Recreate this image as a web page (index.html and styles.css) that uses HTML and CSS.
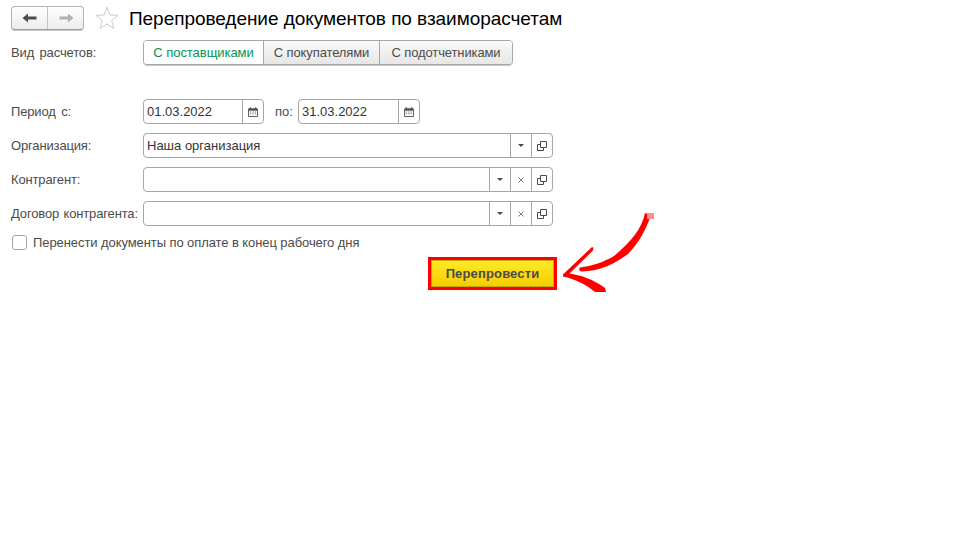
FILE: index.html
```html
<!DOCTYPE html>
<html lang="ru">
<head>
<meta charset="utf-8">
<title>Перепроведение документов по взаиморасчетам</title>
<link rel="stylesheet" href="styles.css">
</head>
<body>
<div class="page">
  <header class="head">
    <div class="nav">
      <button class="nav-btn" type="button" aria-label="Назад">
        <svg width="16" height="12" viewBox="0 0 16 12"><path d="M0.5 6 L6 1.5 V4.5 H14.5 V7.5 H6 V10.5 Z" fill="#4d4d4d"/></svg>
      </button>
      <button class="nav-btn" type="button" aria-label="Вперёд">
        <svg width="16" height="12" viewBox="0 0 16 12"><path d="M15.5 6 L10 1.5 V4.5 H1.5 V7.5 H10 V10.5 Z" fill="#b0b0b0"/></svg>
      </button>
    </div>
    <svg class="star" width="24" height="24" viewBox="0 0 24 24"><path d="M12 1.2 L14.9 9 L23 9.3 L16.7 14.4 L18.9 22.6 L12 18 L5.1 22.6 L7.3 14.4 L1 9.3 L9.1 9 Z" fill="#fff" stroke="#c9ced2" stroke-width="1"/></svg>
    <h1 class="title">Перепроведение документов по взаиморасчетам</h1>
  </header>

  <div class="row row-tabs">
    <span class="label label-gap">Вид расчетов:</span>
    <div class="tabs">
      <span class="tab tab-on tab-a">С поставщиками</span>
      <span class="tab tab-b">С покупателями</span>
      <span class="tab tab-c">С подотчетниками</span>
    </div>
  </div>

  <div class="row row-period">
    <span class="label label-gap">Период с:</span>
    <div class="field field-date">
      <span class="value">01.03.2022</span>
      <span class="cell cell-cal"><svg width="10" height="10" viewBox="0 0 11 11"><path d="M0.5 2.5 H10.5 V10.5 H0.5 Z" fill="#fff" stroke="#4a4a4a"/><path d="M0.5 1.5 H10.5 V4 H0.5 Z" fill="#4a4a4a"/><path d="M2.5 0 V2 M8.5 0 V2" stroke="#4a4a4a"/><path d="M2 5.5 H3.5 M4.7 5.5 H6.2 M7.4 5.5 H8.9 M2 7.5 H3.5 M4.7 7.5 H6.2 M7.4 7.5 H8.9" stroke="#6a6a6a"/></svg></span>
    </div>
    <span class="label-by">по:</span>
    <div class="field field-date field-date-end">
      <span class="value">31.03.2022</span>
      <span class="cell cell-cal"><svg width="10" height="10" viewBox="0 0 11 11"><path d="M0.5 2.5 H10.5 V10.5 H0.5 Z" fill="#fff" stroke="#4a4a4a"/><path d="M0.5 1.5 H10.5 V4 H0.5 Z" fill="#4a4a4a"/><path d="M2.5 0 V2 M8.5 0 V2" stroke="#4a4a4a"/><path d="M2 5.5 H3.5 M4.7 5.5 H6.2 M7.4 5.5 H8.9 M2 7.5 H3.5 M4.7 7.5 H6.2 M7.4 7.5 H8.9" stroke="#6a6a6a"/></svg></span>
    </div>
  </div>

  <div class="row">
    <span class="label">Организация:</span>
    <div class="field field-wide">
      <span class="value">Наша организация</span>
      <span class="cell"><i class="caret"></i></span>
      <span class="cell"><svg width="10" height="10" viewBox="0 0 10 10"><path d="M3.5 0.5 H9.5 V6.5 H3.5 Z M3 3.5 H0.5 V9.5 H6.5 V7" fill="none" stroke="#4a4a4a"/></svg></span>
    </div>
  </div>

  <div class="row">
    <span class="label">Контрагент:</span>
    <div class="field field-wide">
      <span class="value"></span>
      <span class="cell"><i class="caret"></i></span>
      <span class="cell"><svg width="6" height="6" viewBox="0 0 7 7"><path d="M0.5 0.5 L6.5 6.5 M6.5 0.5 L0.5 6.5" stroke="#777" stroke-width="1.1"/></svg></span>
      <span class="cell"><svg width="10" height="10" viewBox="0 0 10 10"><path d="M3.5 0.5 H9.5 V6.5 H3.5 Z M3 3.5 H0.5 V9.5 H6.5 V7" fill="none" stroke="#4a4a4a"/></svg></span>
    </div>
  </div>

  <div class="row">
    <span class="label">Договор контрагента:</span>
    <div class="field field-wide">
      <span class="value"></span>
      <span class="cell"><i class="caret"></i></span>
      <span class="cell"><svg width="6" height="6" viewBox="0 0 7 7"><path d="M0.5 0.5 L6.5 6.5 M6.5 0.5 L0.5 6.5" stroke="#777" stroke-width="1.1"/></svg></span>
      <span class="cell"><svg width="10" height="10" viewBox="0 0 10 10"><path d="M3.5 0.5 H9.5 V6.5 H3.5 Z M3 3.5 H0.5 V9.5 H6.5 V7" fill="none" stroke="#4a4a4a"/></svg></span>
    </div>
  </div>

  <label class="check-row">
    <span class="check"></span>
    <span class="label-check">Перенести документы по оплате в конец рабочего дня</span>
  </label>

  <div class="action">
    <div class="frame"><button class="primary" type="button">Перепровести</button></div>
  </div>

  <svg class="arrow" width="100" height="85" viewBox="0 0 100 85">
    <path d="M86 3 C83 18 73 31 55 46 C45 52 33 56 21 57.5 C19.5 59 20 61.5 23 61.5 C41 61.5 57 53 69 44 C79 34 87 20 92 5 Z" fill="#f00"/>
    <path d="M88 3 H95 V9 H88 Z" fill="#ff8c8c"/>
    <path d="M33 37 C34.5 37 35 39.5 33.5 41 L10.5 63.5 C21 65 34 69 46 78 L47 82 L36 82 C28 75 16 69 4 66.5 L4 64.5 Z" fill="#f00"/>
  </svg>
</div>
</body>
</html>
```

FILE: styles.css
```css
* { box-sizing: border-box; }
html, body { margin: 0; padding: 0; background: #fff; }
body { font-family: "Liberation Sans", Arial, sans-serif; font-size: 13px; color: #4b4b4b; }

.page { position: relative; width: 960px; height: 560px; padding: 6px 0 0 11px; overflow: hidden; }

.head { display: flex; align-items: center; height: 24px; margin-bottom: 10px; }
.nav { display: flex; width: 73px; height: 24px; border: 1px solid #b3b3b3; border-bottom-color: #9c9c9c; border-radius: 4px; background: linear-gradient(#fff, #ececec); box-shadow: 0 1px 0 #c8c8c8; }
.nav-btn { flex: 1; display: flex; align-items: center; justify-content: center; padding: 0; border: 0; background: none; }
.nav-btn + .nav-btn { border-left: 1px solid #c4c4c4; }
.star { margin-left: 11px; flex: none; }
.title { margin: 2px 0 0 10px; font-size: 19px; font-weight: 400; letter-spacing: -0.05px; color: #000; line-height: 24px; white-space: nowrap; }

.row { display: flex; align-items: center; height: 25px; margin-bottom: 9px; }
.row-tabs { margin-bottom: 34px; }
.label { width: 132px; flex: none; white-space: nowrap; letter-spacing: -0.15px; word-spacing: 1px; }
.label-gap { word-spacing: 2px; }
.tabs { display: flex; width: 370px; height: 25px; border: 1px solid #a6a6a6; border-radius: 4px; overflow: hidden; box-shadow: 0 1px 0 #c8c8c8; }
.tab { display: flex; align-items: center; justify-content: center; border-left: 1px solid #a6a6a6; background: linear-gradient(#fafafa, #e6e6e6); letter-spacing: -0.12px; white-space: nowrap; }
.tab-a { width: 119px; border-left: 0; }
.tab-b { width: 116px; }
.tab-c { flex: 1; }
.tab-on { background: #fff; color: #00954e; letter-spacing: -0.05px; }

.field { display: flex; height: 25px; border: 1px solid #a6a6a6; border-radius: 4px; background: #fff; }
.field-date { width: 121px; }
.field-date-end { width: 122px; }
.field-wide { width: 410px; }
.value { flex: 1; min-width: 0; padding-left: 3px; line-height: 23px; color: #333; white-space: nowrap; }
.cell { width: 21px; flex: none; display: flex; align-items: center; justify-content: center; border-left: 1px solid #a6a6a6; }
.label-by { margin: 0 5px 0 11px; width: 18px; flex: none; }
.caret { display: block; width: 0; height: 0; border-left: 3px solid transparent; border-right: 3px solid transparent; border-top: 3px solid #4a4a4a; }

.check-row { display: flex; align-items: center; height: 15px; margin: 1px 0 7px 1px; }
.check { width: 15px; height: 15px; border: 1px solid #a6a6a6; border-radius: 3px; background: #fff; }
.label-check { margin-left: 6px; letter-spacing: -0.08px; white-space: nowrap; }

.action { display: flex; padding-left: 417px; }
.frame { width: 129px; height: 33px; border: 3px solid #f00; }
.primary { display: block; width: 100%; height: 100%; padding: 0; border: 1px solid #c9a800; background: linear-gradient(#ffe925, #f4cd00); font: 700 13px "Liberation Sans", Arial, sans-serif; letter-spacing: 0.15px; color: #4b4b4b; }

.arrow { position: absolute; left: 559px; top: 210px; }
```
